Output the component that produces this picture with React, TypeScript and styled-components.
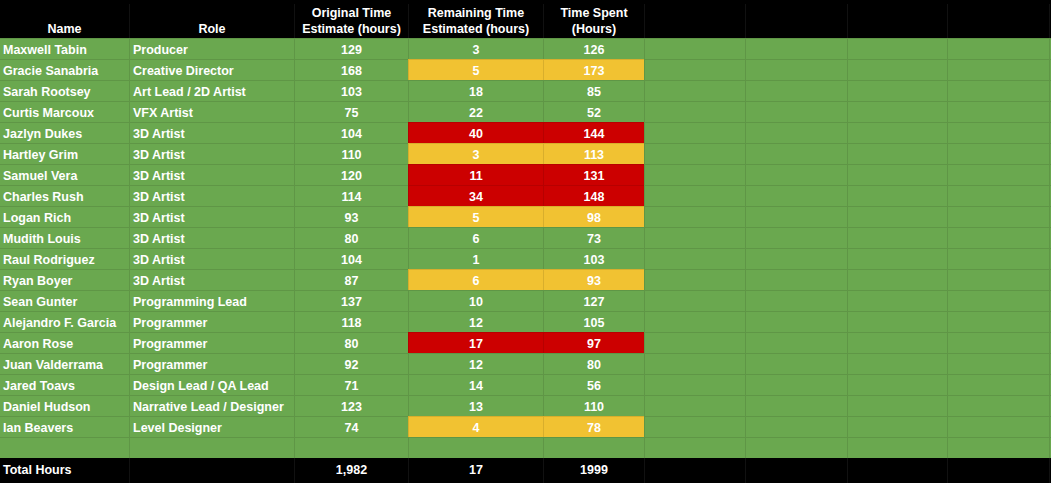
import React from "react";
import styled, { createGlobalStyle, css } from "styled-components";

const GlobalStyle = createGlobalStyle`
  html, body {
    margin: 0;
    padding: 0;
    background: #000000;
  }
  body {
    font-family: "Liberation Sans", Arial, sans-serif;
  }
`;

const COLUMNS = "129px 165px 114px 135px 101px 101px 102px 100px 102px 2px";

type Tone = "green" | "yellow" | "red";

const toneColors: Record<Tone, string> = {
  green: "#6aa84f",
  yellow: "#f1c232",
  red: "#cc0000",
};

const Sheet = styled.div`
  width: 1051px;
  height: 483px;
  display: flex;
  flex-direction: column;
  background: #000000;
  color: #ffffff;
  font-family: "Liberation Sans", Arial, sans-serif;
  font-weight: 700;
  font-size: 12.5px;
  overflow: hidden;
`;

const HeaderRow = styled.div`
  display: grid;
  grid-template-columns: ${COLUMNS};
  height: 38px;
  padding-top: 4px;
  box-sizing: border-box;
  background: #000000;
`;

const HeaderCell = styled.div<{ $first?: boolean }>`
  display: flex;
  align-items: flex-end;
  justify-content: center;
  text-align: center;
  line-height: 16px;
  padding-bottom: 1px;
  box-sizing: border-box;
  border-left: ${(p) => (p.$first ? "none" : "1px solid #111111")};
  white-space: pre-line;
`;

const Body = styled.div`
  display: flex;
  flex-direction: column;
  background: ${toneColors.green};
`;

const Row = styled.div`
  display: grid;
  grid-template-columns: ${COLUMNS};
  height: 21px;
`;

const Cell = styled.div<{ $tone?: Tone; $align?: "left" | "center"; $first?: boolean }>`
  display: flex;
  align-items: center;
  box-sizing: border-box;
  padding-top: 2px;
  background: ${(p) => toneColors[p.$tone ?? "green"]};
  border-top: 1px solid rgba(0, 0, 0, 0.1);
  border-left: ${(p) => (p.$first ? "none" : "1px solid rgba(0, 0, 0, 0.1)")};
  white-space: nowrap;
  overflow: hidden;
  ${(p) =>
    p.$align === "center"
      ? css`
          justify-content: center;
        `
      : css`
          justify-content: flex-start;
          padding-left: 3px;
        `}
`;

const FooterRow = styled.div`
  display: grid;
  grid-template-columns: ${COLUMNS};
  height: 25px;
  background: #000000;
`;

const FooterCell = styled.div<{ $align?: "left" | "center"; $first?: boolean }>`
  display: flex;
  align-items: center;
  box-sizing: border-box;
  padding-bottom: 2px;
  border-left: ${(p) => (p.$first ? "none" : "1px solid #111111")};
  white-space: nowrap;
  ${(p) =>
    p.$align === "center"
      ? css`
          justify-content: center;
        `
      : css`
          justify-content: flex-start;
          padding-left: 3px;
        `}
`;

type Member = {
  name: string;
  role: string;
  original: number;
  remaining: number;
  spent: number;
  tone: Tone;
};

const members: Member[] = [
  { name: "Maxwell Tabin", role: "Producer", original: 129, remaining: 3, spent: 126, tone: "green" },
  { name: "Gracie Sanabria", role: "Creative Director", original: 168, remaining: 5, spent: 173, tone: "yellow" },
  { name: "Sarah Rootsey", role: "Art Lead / 2D Artist", original: 103, remaining: 18, spent: 85, tone: "green" },
  { name: "Curtis Marcoux", role: "VFX Artist", original: 75, remaining: 22, spent: 52, tone: "green" },
  { name: "Jazlyn Dukes", role: "3D Artist", original: 104, remaining: 40, spent: 144, tone: "red" },
  { name: "Hartley Grim", role: "3D Artist", original: 110, remaining: 3, spent: 113, tone: "yellow" },
  { name: "Samuel Vera", role: "3D Artist", original: 120, remaining: 11, spent: 131, tone: "red" },
  { name: "Charles Rush", role: "3D Artist", original: 114, remaining: 34, spent: 148, tone: "red" },
  { name: "Logan Rich", role: "3D Artist", original: 93, remaining: 5, spent: 98, tone: "yellow" },
  { name: "Mudith Louis", role: "3D Artist", original: 80, remaining: 6, spent: 73, tone: "green" },
  { name: "Raul Rodriguez", role: "3D Artist", original: 104, remaining: 1, spent: 103, tone: "green" },
  { name: "Ryan Boyer", role: "3D Artist", original: 87, remaining: 6, spent: 93, tone: "yellow" },
  { name: "Sean Gunter", role: "Programming Lead", original: 137, remaining: 10, spent: 127, tone: "green" },
  { name: "Alejandro F. Garcia", role: "Programmer", original: 118, remaining: 12, spent: 105, tone: "green" },
  { name: "Aaron Rose", role: "Programmer", original: 80, remaining: 17, spent: 97, tone: "red" },
  { name: "Juan Valderrama", role: "Programmer", original: 92, remaining: 12, spent: 80, tone: "green" },
  { name: "Jared Toavs", role: "Design Lead / QA Lead", original: 71, remaining: 14, spent: 56, tone: "green" },
  { name: "Daniel Hudson", role: "Narrative Lead / Designer", original: 123, remaining: 13, spent: 110, tone: "green" },
  { name: "Ian Beavers", role: "Level Designer", original: 74, remaining: 4, spent: 78, tone: "yellow" },
];

const headers = [
  "Name",
  "Role",
  "Original Time\nEstimate (hours)",
  "Remaining Time\nEstimated (hours)",
  "Time Spent\n(Hours)",
  "",
  "",
  "",
  "",
  "",
];

const EmptyCells: React.FC = () => (
  <>
    <Cell />
    <Cell />
    <Cell />
    <Cell />
    <Cell />
  </>
);

export default function App() {
  return (
    <>
      <GlobalStyle />
      <Sheet>
        <HeaderRow>
          {headers.map((h, i) => (
            <HeaderCell key={i} $first={i === 0}>
              {h}
            </HeaderCell>
          ))}
        </HeaderRow>
        <Body>
          {members.map((m) => (
            <Row key={m.name}>
              <Cell $first>{m.name}</Cell>
              <Cell>{m.role}</Cell>
              <Cell $align="center">{m.original}</Cell>
              <Cell $align="center" $tone={m.tone}>
                {m.remaining}
              </Cell>
              <Cell $align="center" $tone={m.tone}>
                {m.spent}
              </Cell>
              <EmptyCells />
            </Row>
          ))}
          <Row>
            <Cell $first />
            <Cell />
            <Cell />
            <Cell />
            <Cell />
            <EmptyCells />
          </Row>
        </Body>
        <FooterRow>
          <FooterCell $first>Total Hours</FooterCell>
          <FooterCell />
          <FooterCell $align="center">1,982</FooterCell>
          <FooterCell $align="center">17</FooterCell>
          <FooterCell $align="center">1999</FooterCell>
          <FooterCell />
          <FooterCell />
          <FooterCell />
          <FooterCell />
          <FooterCell />
        </FooterRow>
      </Sheet>
    </>
  );
}
